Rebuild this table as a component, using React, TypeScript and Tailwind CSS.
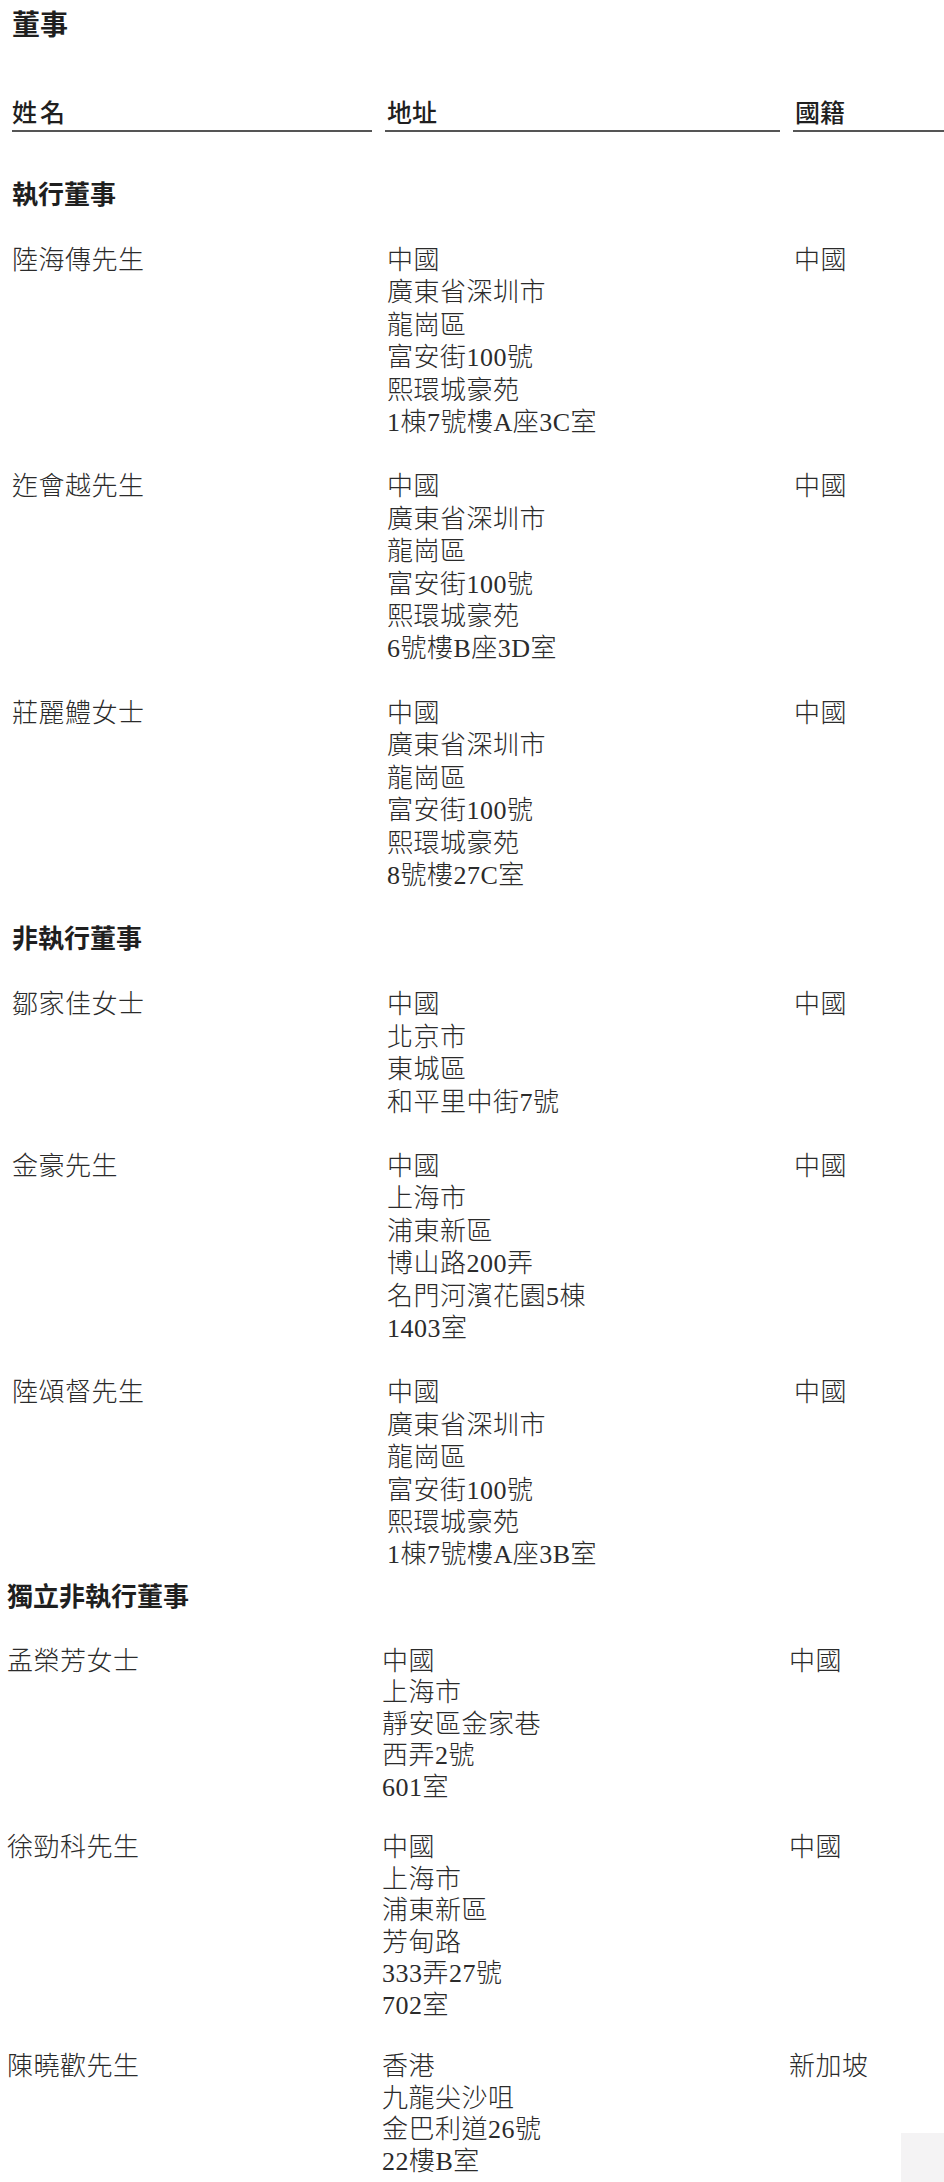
const body = '"Liberation Serif", "Noto Sans CJK TC", serif';
const head = '"Noto Sans CJK TC", "Noto Sans CJK SC", sans-serif';

type Director = { name: string; address: string[]; nationality: string; gap: string };

const exec: Director[] = [
  { name: "陸海傳先生", address: ["中國", "廣東省深圳市", "龍崗區", "富安街100號", "熙環城豪苑", "1棟7號樓A座3C室"], nationality: "中國", gap: "mt-[37px]" },
  { name: "迮會越先生", address: ["中國", "廣東省深圳市", "龍崗區", "富安街100號", "熙環城豪苑", "6號樓B座3D室"], nationality: "中國", gap: "mt-[32px]" },
  { name: "莊麗鱧女士", address: ["中國", "廣東省深圳市", "龍崗區", "富安街100號", "熙環城豪苑", "8號樓27C室"], nationality: "中國", gap: "mt-[32px]" },
];

const nonExec: Director[] = [
  { name: "鄒家佳女士", address: ["中國", "北京市", "東城區", "和平里中街7號"], nationality: "中國", gap: "mt-[37px]" },
  { name: "金豪先生", address: ["中國", "上海市", "浦東新區", "博山路200弄", "名門河濱花園5棟", "1403室"], nationality: "中國", gap: "mt-[32px]" },
  { name: "陸頌督先生", address: ["中國", "廣東省深圳市", "龍崗區", "富安街100號", "熙環城豪苑", "1棟7號樓A座3B室"], nationality: "中國", gap: "mt-[32px]" },
];

const indep: Director[] = [
  { name: "孟榮芳女士", address: ["中國", "上海市", "靜安區金家巷", "西弄2號", "601室"], nationality: "中國", gap: "mt-[36px]" },
  { name: "徐勁科先生", address: ["中國", "上海市", "浦東新區", "芳甸路", "333弄27號", "702室"], nationality: "中國", gap: "mt-[29px]" },
  { name: "陳曉歡先生", address: ["香港", "九龍尖沙咀", "金巴利道26號", "22樓B室"], nationality: "新加坡", gap: "mt-[30px]" },
];

function Row({ d, leading }: { d: Director; leading: string }) {
  return (
    <div className={`grid grid-cols-[360px_395px_1fr] gap-x-[13px] text-[26px] font-light tracking-[0.5px] text-[#2b2b2b] ${leading} ${d.gap}`} style={{ fontFamily: body }}>
      <div>{d.name}</div>
      <div className="pl-[2px]">
        {d.address.map((l) => (
          <div key={l}>{l}</div>
        ))}
      </div>
      <div className="pl-[1px]">{d.nationality}</div>
    </div>
  );
}

function Heading({ children, className }: { children: string; className: string }) {
  return (
    <h2 className={`text-[26px] leading-[30px] font-bold text-[#1f1f1f] ${className}`} style={{ fontFamily: head }}>
      {children}
    </h2>
  );
}

export default function App() {
  return (
    <main className="relative h-[2182px] overflow-hidden bg-white pl-[12px] pt-[5px]">
      <h1 className="text-[28px] leading-[36px] font-bold text-[#1f1f1f]" style={{ fontFamily: head }}>董事</h1>

      <div className="mt-[55px] grid grid-cols-[360px_395px_1fr] gap-x-[13px] text-[25px] leading-[30px] font-medium text-[#1f1f1f]" style={{ fontFamily: head }}>
        <div className="border-b-2 border-[#555] pb-[4px] tracking-[3px]">姓名</div>
        <div className="border-b-2 border-[#555] pb-[4px] pl-[2px]">地址</div>
        <div className="-mr-[40px] border-b-2 border-[#555] pb-[4px] pl-[2px]">國籍</div>
      </div>

      <Heading className="mt-[46px]">執行董事</Heading>
      {exec.map((d) => (
        <Row key={d.name} d={d} leading="leading-[32.4px]" />
      ))}

      <Heading className="mt-[30px]">非執行董事</Heading>
      {nonExec.map((d) => (
        <Row key={d.name} d={d} leading="leading-[32.4px]" />
      ))}

      <div className="-ml-[5px]">
        <Heading className="mt-[8px]">獨立非執行董事</Heading>
        {indep.map((d) => (
          <Row key={d.name} d={d} leading="leading-[31.5px]" />
        ))}
      </div>

      <div className="absolute right-0 bottom-0 h-[49px] w-[43px] bg-[#f4f3f4]" />
    </main>
  );
}
